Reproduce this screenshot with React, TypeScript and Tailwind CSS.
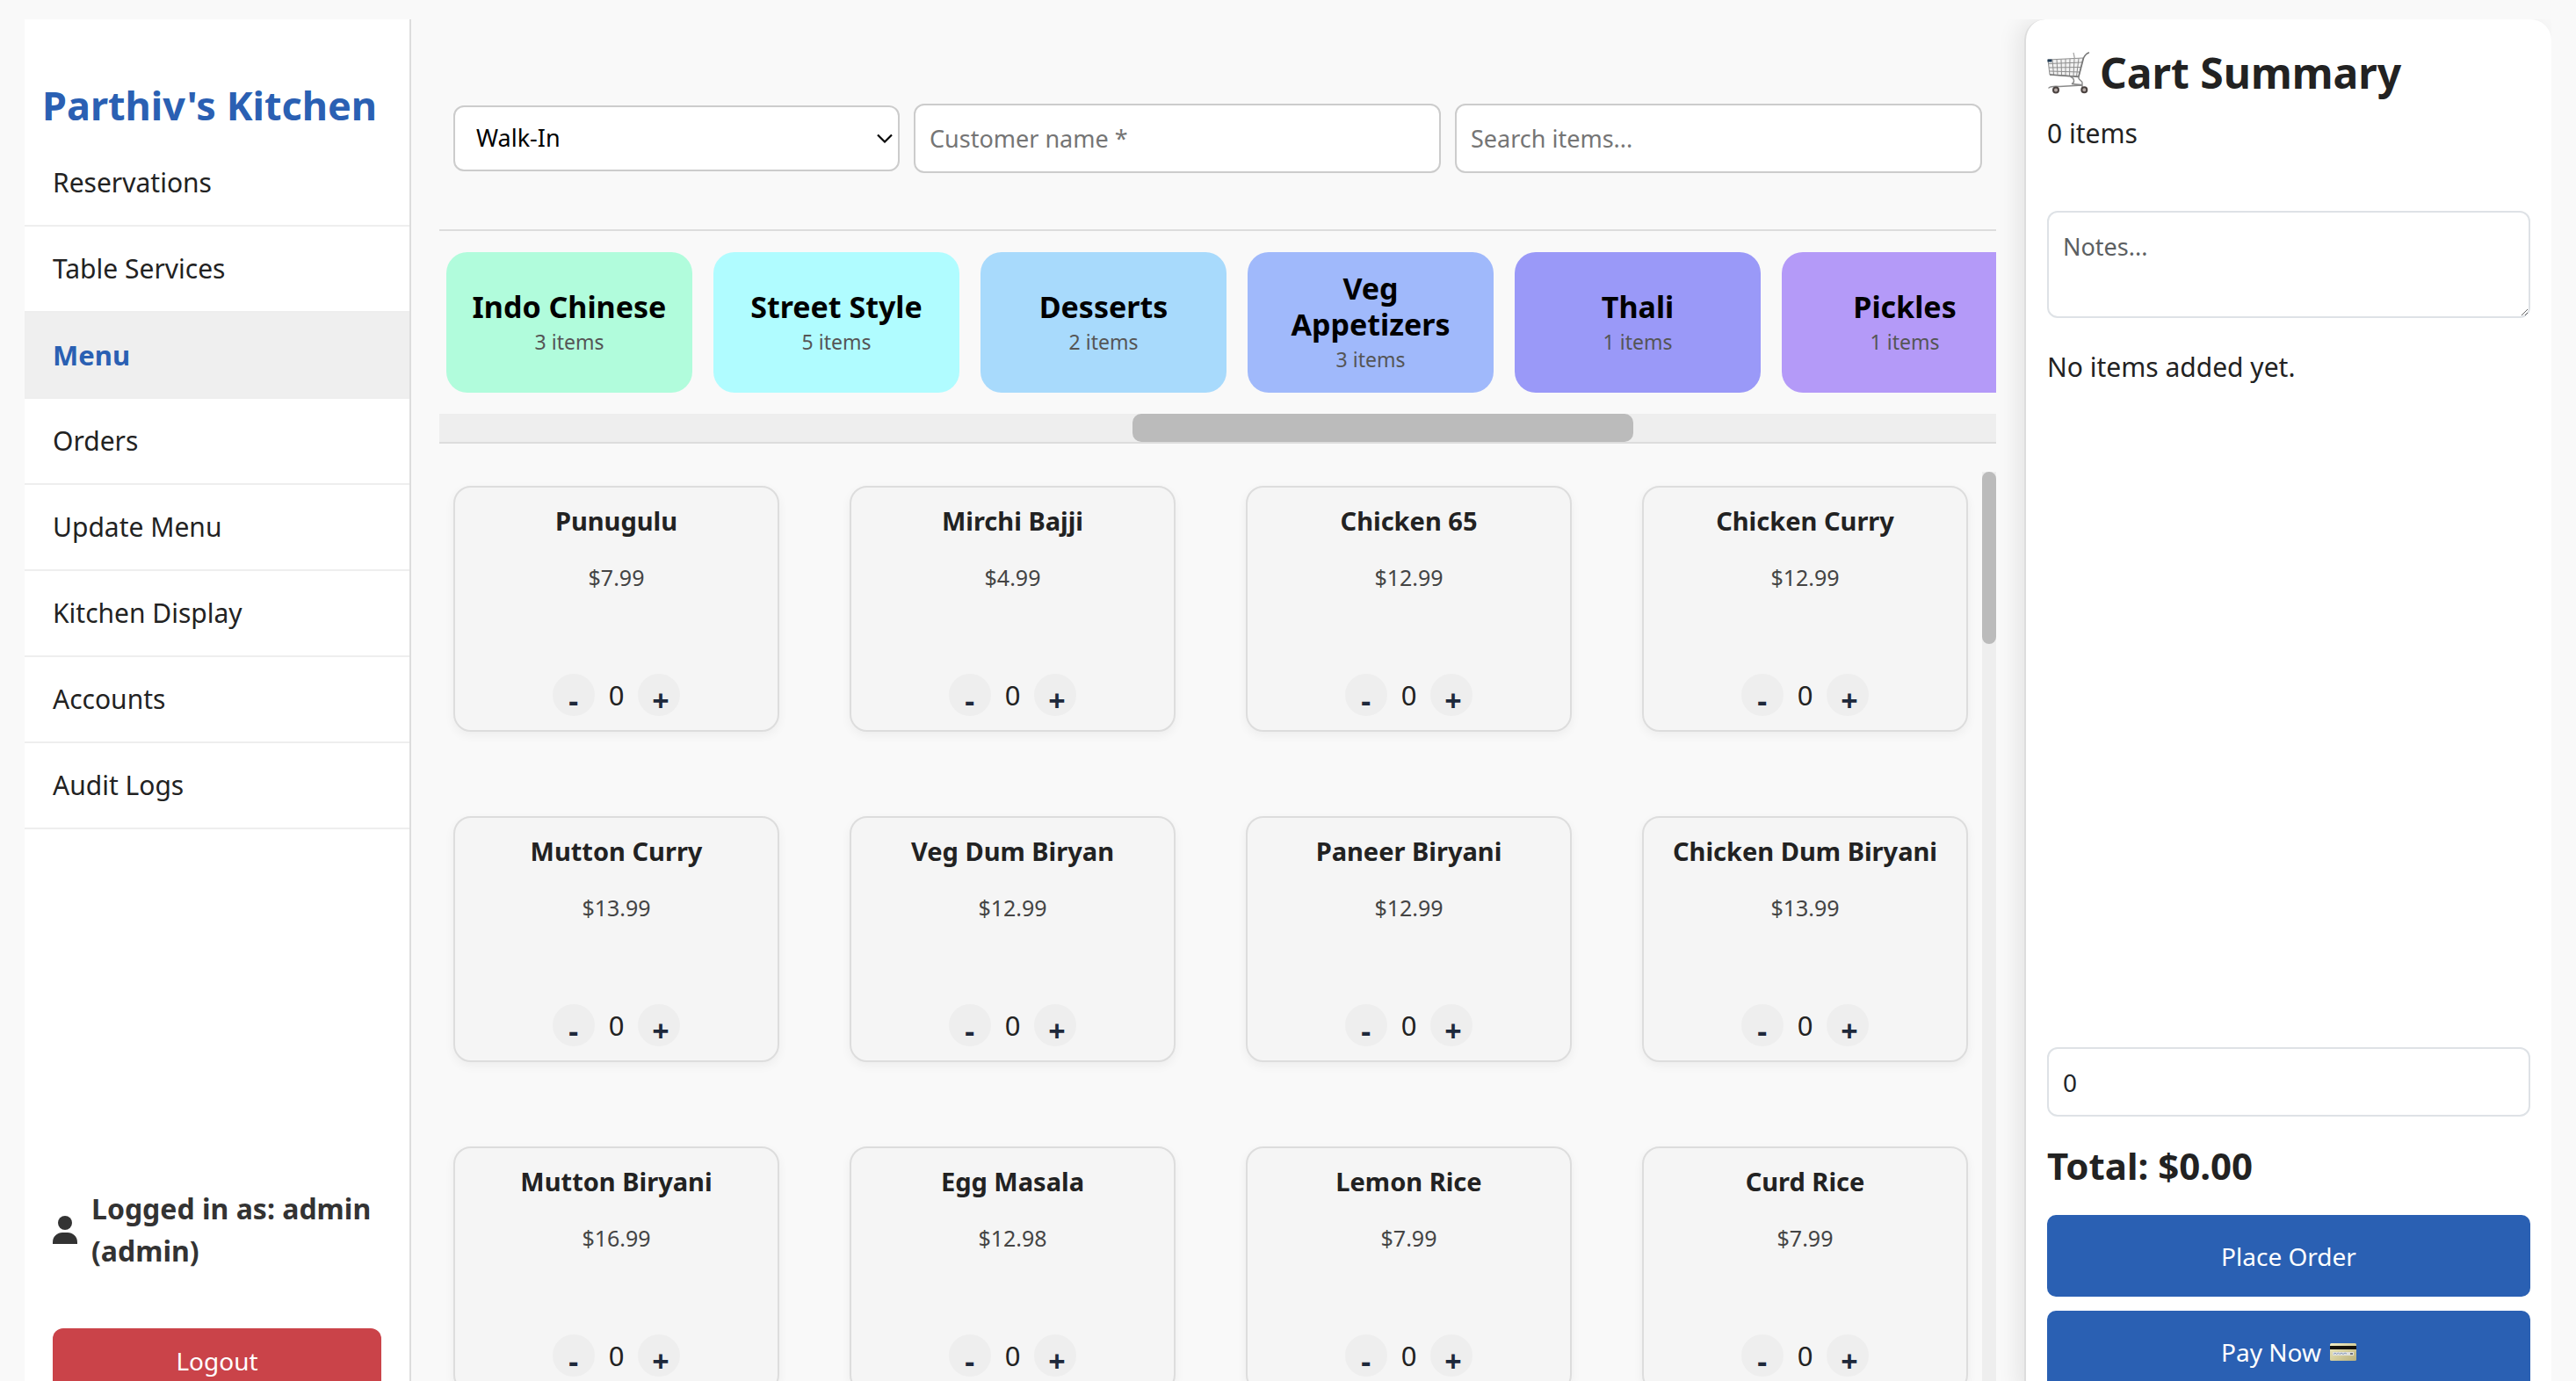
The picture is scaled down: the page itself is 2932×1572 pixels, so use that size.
import React, { useState } from "react";

type Category = { name: string; count: number; color: string };
type Item = { name: string; price: string };

const navItems = [
  "Reservations",
  "Table Services",
  "Menu",
  "Orders",
  "Update Menu",
  "Kitchen Display",
  "Accounts",
  "Audit Logs",
];

const categories: Category[] = [
  { name: "Indo Chinese", count: 3, color: "bg-[#b1fcdc]" },
  { name: "Street Style", count: 5, color: "bg-[#b0fcff]" },
  { name: "Desserts", count: 2, color: "bg-[#a8dafc]" },
  { name: "Veg Appetizers", count: 3, color: "bg-[#a0b9fb]" },
  { name: "Thali", count: 1, color: "bg-[#9a99f8]" },
  { name: "Pickles", count: 1, color: "bg-[#b49af8]" },
];

const items: Item[] = [
  { name: "Punugulu", price: "$7.99" },
  { name: "Mirchi Bajji", price: "$4.99" },
  { name: "Chicken 65", price: "$12.99" },
  { name: "Chicken Curry", price: "$12.99" },
  { name: "Mutton Curry", price: "$13.99" },
  { name: "Veg Dum Biryan", price: "$12.99" },
  { name: "Paneer Biryani", price: "$12.99" },
  { name: "Chicken Dum Biryani", price: "$13.99" },
  { name: "Mutton Biryani", price: "$16.99" },
  { name: "Egg Masala", price: "$12.98" },
  { name: "Lemon Rice", price: "$7.99" },
  { name: "Curd Rice", price: "$7.99" },
];

function PersonIcon() {
  return (
    <svg className="h-8 w-7 shrink-0" viewBox="0 0 28 32" fill="#333" aria-hidden="true">
      <circle cx="14" cy="8" r="8" />
      <path d="M0 32v-2C0 23 5.500 19 11 19h6c5.500 0 11 4 11 11v2z" />
    </svg>
  );
}

function CartIcon() {
  return (
    <svg className="size-12 shrink-0" viewBox="0 0 48 48" fill="none" aria-hidden="true">
      <g stroke="#8f8f8f" strokeWidth="1">
        <path d="M1 9 41 7 36 28 3 26z" fill="#f1f1f1" />
        <path d="M1.500 13.500 40 12M2 18 39 17.500M2.500 22 37.500 23" />
        <path d="M6 9 7.500 26M11 8.500 12 26.500M16 8.500 16.500 27M21 8 21 27M26 8 25.500 27.500M31 7.500 30 27.500M36 7.500 33.500 28" />
      </g>
      <path d="M30 1 31.500 8" stroke="#a5a5a5" strokeWidth="1.200" />
      <path d="M47.500 1C44 2 43 4 41.500 7L36 28" stroke="#777" strokeWidth="1.600" strokeLinecap="round" />
      <path d="M3 26 36 28.500" stroke="#777" strokeWidth="1.400" />
      <path
        d="M27 28.500C31 30 32 35 28 36.500L39 37.500M36 28.500C35 33 40 32 40 35V40M40 38 14 39.500C8 39 4 39.500 2 41M8 39.500 10 42"
        stroke="#8a8a8a"
        strokeWidth="1.400"
        strokeLinecap="round"
      />
      <rect x="0.500" y="8.500" width="5" height="3" fill="#1f3a55" />
      <circle cx="10" cy="43.500" r="3" fill="#b5aaa6" stroke="#4a4240" strokeWidth="2" />
      <circle cx="42.300" cy="43.300" r="3" fill="#b5aaa6" stroke="#4a4240" strokeWidth="2" />
    </svg>
  );
}

function CreditCardIcon() {
  return (
    <svg className="h-5 w-[30px] shrink-0" viewBox="0 0 30 20" aria-hidden="true">
      <defs>
        <linearGradient id="cardFace" x1="0" y1="0" x2="1" y2="1">
          <stop offset="0" stopColor="#f1edc6" />
          <stop offset="0.5" stopColor="#d6cf9e" />
          <stop offset="1" stopColor="#b9b07c" />
        </linearGradient>
      </defs>
      <rect width="30" height="20" rx="1.500" fill="url(#cardFace)" />
      <rect y="3" width="30" height="4" fill="#14120c" />
      <rect x="3" y="10" width="24" height="4" fill="#dfe0dc" />
      <path d="M4 12.500l2-1.500 1.500 1.500 2-1.500 1.500 1.500 2-1.500 2 1.500 2-1.500 2 1" stroke="#7f93bd" strokeWidth="0.900" fill="none" />
      <rect x="23" y="11" width="3" height="2" fill="#6f7480" />
    </svg>
  );
}

function Sidebar() {
  return (
    <aside className="flex w-[440px] shrink-0 flex-col border-r-2 border-[#ddd] bg-white">
      <h2 className="px-4 pt-[68px] pb-[10px] text-center text-[45px] leading-[60px] font-bold text-[#2a60b3] self-start ml-1">
        Parthiv's Kitchen
      </h2>
      <nav>
        {navItems.map((label) => (
          <a
            key={label}
            href="#"
            className={
              label === "Menu"
                ? "block border-b-2 border-[#eee] bg-[#efefef] px-8 py-6 text-[31px] leading-[48px] font-bold text-[#2a60b3]"
                : "block border-b-2 border-[#eee] px-8 py-6 text-[30px] leading-[48px] text-[#222]"
            }
          >
            {label}
          </a>
        ))}
      </nav>
      <div className="mt-auto px-8 pb-2">
        <div className="flex items-center gap-4 pb-16 text-[32px] leading-[48px] font-bold text-[#333]">
          <PersonIcon />
          <span>Logged in as: admin (admin)</span>
        </div>
        <button type="button" className="h-[74px] w-full rounded-xl bg-[#ca4349] text-[28px] text-white">
          Logout
        </button>
      </div>
    </aside>
  );
}

function Toolbar() {
  return (
    <div className="flex items-center gap-4 px-4 pt-24 pb-16 text-[27px]">
      <div className="relative w-[508px] shrink-0">
        <select
          aria-label="Order type"
          className="h-[75px] w-full appearance-none rounded-xl border-2 border-[#ccc] bg-white px-6 text-black"
        >
          <option>Walk-In</option>
        </select>
        <svg
          className="pointer-events-none absolute top-8 right-2 h-3 w-[18px]"
          viewBox="0 0 18 12"
          fill="none"
          stroke="#000"
          strokeWidth="2.2"
          aria-hidden="true"
        >
          <path d="M1 1.500 9 9.500 17 1.500" />
        </svg>
      </div>
      <input
        aria-label="Customer name"
        placeholder="Customer name *"
        className="h-[79px] min-w-0 flex-1 rounded-xl border-2 border-[#ccc] bg-white px-4 placeholder:text-[#757575]"
      />
      <input
        aria-label="Search items"
        placeholder="Search items..."
        className="h-[79px] min-w-0 flex-1 rounded-xl border-2 border-[#ccc] bg-white px-4 placeholder:text-[#757575]"
      />
    </div>
  );
}

function CategoryStrip() {
  return (
    <div className="border-y-2 border-[#ddd]">
      <div className="flex gap-6 overflow-hidden px-2 py-6">
        {categories.map((c) => (
          <button
            key={c.name}
            type="button"
            className={`flex h-40 w-[280px] shrink-0 flex-col items-center justify-center rounded-3xl px-6 ${c.color}`}
          >
            <span className="text-[34px] leading-[41px] font-bold text-black">{c.name}</span>
            <span className="pt-0.5 text-[23px] leading-[34px] text-[#555]">{c.count} items</span>
          </button>
        ))}
      </div>
      <div className="h-8 bg-[#eee]">
        <div className="ml-[44.5%] h-full w-[32.2%] rounded-[10px] bg-[#bbb]" />
      </div>
    </div>
  );
}

function ItemCard({ item }: { item: Item }) {
  const [qty, setQty] = useState(0);
  return (
    <article className="flex h-[280px] flex-col items-center rounded-[20px] border-2 border-[#ddd] bg-[#f5f5f5] pt-[18px] pb-4 shadow-[0_4px_12px_rgba(0,0,0,0.05)]">
      <h3 className="text-[29px] leading-[40px] font-bold text-[#222]">{item.name}</h3>
      <p className="mt-6 text-[25px] leading-[40px] text-[#444]">{item.price}</p>
      <div className="mt-auto flex items-center gap-4">
        <button
          type="button"
          aria-label={`Remove one ${item.name}`}
          onClick={() => setQty(Math.max(0, qty - 1))}
          className="size-12 rounded-full bg-[#eee] px-4 pt-3 text-[34px] leading-9 font-bold text-[#1e293b]"
        >
          -
        </button>
        <span className="text-[31px] leading-[48px] text-[#222]">{qty}</span>
        <button
          type="button"
          aria-label={`Add one ${item.name}`}
          onClick={() => setQty(qty + 1)}
          className="size-12 rounded-full bg-[#eee] px-4 pt-3 text-[34px] leading-9 font-bold text-[#1e293b]"
        >
          +
        </button>
      </div>
    </article>
  );
}

function ItemGrid() {
  return (
    <div className="mt-8 flex min-h-0 flex-1">
      <div className="grid flex-1 auto-rows-max grid-cols-4 gap-x-20 gap-y-24 overflow-hidden p-4">
        {items.map((item) => (
          <ItemCard key={item.name} item={item} />
        ))}
      </div>
      <div className="w-4 bg-[#eee]">
        <div className="h-[196px] rounded-lg bg-[#bbb]" />
      </div>
    </div>
  );
}

function CartPanel() {
  return (
    <aside className="flex w-[600px] shrink-0 flex-col rounded-3xl border-l-2 border-[#ddd] bg-white px-6 pb-[9px] text-[#222] shadow-[-8px_0_24px_rgba(0,0,0,0.08)]">
      <h2 className="flex items-center gap-3 pt-8 text-[48px] leading-[58px] font-bold">
        <CartIcon />
        Cart Summary
      </h2>
      <p className="mt-4 text-[30px] leading-[48px]">0 items</p>
      <textarea
        aria-label="Notes"
        placeholder="Notes..."
        className="mt-16 h-[122px] w-full resize shrink-0 rounded-xl border-2 border-[#dee2e6] px-4 pt-[18px] text-[27px] leading-[42px] placeholder:text-[#5c5f62]"
      />
      <p className="mt-8 text-[30px] leading-[48px]">No items added yet.</p>
      <input
        aria-label="Discount"
        defaultValue="0"
        className="mt-auto h-[79px] w-full shrink-0 rounded-xl border-2 border-[#dee2e6] px-4 text-[28px] text-[#212529]"
      />
      <h3 className="py-8 text-[42px] leading-[48px] font-bold">Total: $0.00</h3>
      <button type="button" className="h-[93px] w-full shrink-0 rounded-[10px] bg-[#2a60b3] text-[28px] text-white">
        Place Order
      </button>
      <button
        type="button"
        className="mt-4 flex h-[93px] w-full shrink-0 items-center justify-center gap-[10px] rounded-[10px] bg-[#2a60b3] text-[28px] text-white"
      >
        Pay Now
        <CreditCardIcon />
      </button>
    </aside>
  );
}

export default function App() {
  return (
    <div className="h-screen overflow-hidden bg-[#f9f9f9] px-7 pt-[22px] font-['Noto_Sans',sans-serif]">
      <div className="flex h-screen gap-8 [clip-path:inset(0)]">
        <Sidebar />
        <main className="flex min-w-0 flex-1 flex-col">
          <Toolbar />
          <CategoryStrip />
          <ItemGrid />
        </main>
        <CartPanel />
      </div>
    </div>
  );
}
